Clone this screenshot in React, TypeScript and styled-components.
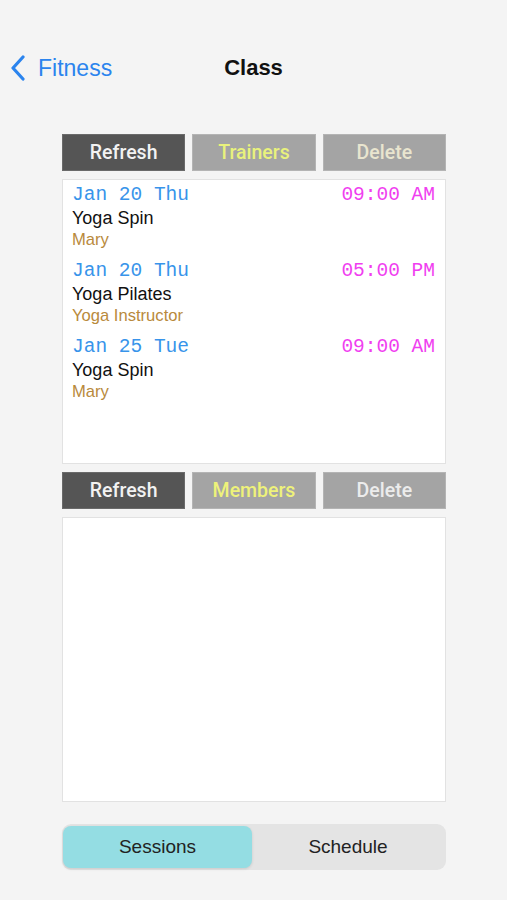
import React from "react"
import styled, { createGlobalStyle } from "styled-components"

const GlobalStyle = createGlobalStyle`
	html, body {
		margin: 0;
		padding: 0;
		background: #f4f4f4;
		font-family: "Liberation Sans", Arial, sans-serif;
	}
`

const Page = styled.div`
	width: 507px;
	height: 900px;
	display: flex;
	flex-direction: column;
	background: #f4f4f4;
`

const NavBar = styled.div`
	height: 48px;
	margin-top: 44px;
	display: flex;
	align-items: center;
	position: relative;
`

const BackButton = styled.div`
	display: flex;
	align-items: center;
	gap: 12px;
	padding-left: 10px;
	color: #2b84ee;
	font-size: 23px;
`

const NavTitle = styled.div`
	position: absolute;
	left: 0;
	right: 0;
	text-align: center;
	font-size: 22px;
	font-weight: bold;
	color: #111;
	pointer-events: none;
`

const Content = styled.div`
	display: flex;
	flex-direction: column;
	padding: 42px 61px 0 62px;
`

const ButtonRow = styled.div`
	display: grid;
	grid-template-columns: 1fr 1fr 1fr;
	gap: 7px;
	height: 37px;
`

const ActionButton = styled.div<{ $dark?: boolean; $color: string }>`
	display: flex;
	align-items: center;
	justify-content: center;
	background: ${(p) => (p.$dark ? "#555555" : "#a4a4a4")};
	border: 1px solid ${(p) => (p.$dark ? "#6a6a6a" : "#b4b4b4")};
	color: ${(p) => p.$color};
	font-family: Roboto, "Liberation Sans", sans-serif;
	font-size: 19.5px;
	font-weight: 500;
	box-sizing: border-box;
`

const Panel = styled.div`
	margin-top: 8px;
	margin-bottom: 8px;
	height: 285px;
	box-sizing: border-box;
	background: #ffffff;
	border: 1px solid #e2e2e2;
	padding: 3px 10px 0 9px;
	display: flex;
	flex-direction: column;
	gap: 8px;
`

const Session = styled.div`
	display: flex;
	flex-direction: column;
`

const DateLine = styled.div`
	display: flex;
	justify-content: space-between;
	height: 24px;
	line-height: 24px;
	font-family: "Liberation Mono", "Courier New", monospace;
	font-size: 19.5px;
`

const DateText = styled.span`
	color: #3894ea;
`

const TimeText = styled.span`
	color: #f03ef0;
`

const ClassName = styled.div`
	height: 22px;
	line-height: 22px;
	font-size: 18px;
	color: #111;
`

const Trainer = styled.div`
	height: 22px;
	line-height: 22px;
	font-size: 16.6px;
	color: #b98a3c;
`

const Segmented = styled.div`
	margin-top: 14px;
	height: 46px;
	box-sizing: border-box;
	background: #e4e4e4;
	border-radius: 9px;
	padding: 2px 2px 2px 1px;
	display: grid;
	grid-template-columns: 189px 1fr;
`

const Segment = styled.div<{ $active?: boolean }>`
	display: flex;
	align-items: center;
	justify-content: center;
	border-radius: 8px;
	font-size: 19px;
	color: #222;
	background: ${(p) => (p.$active ? "#94dde3" : "transparent")};
	box-shadow: ${(p) => (p.$active ? "0 1px 3px rgba(0,0,0,0.12)" : "none")};
`

const sessions = [
	{ date: "Jan 20 Thu", time: "09:00 AM", name: "Yoga Spin", trainer: "Mary" },
	{ date: "Jan 20 Thu", time: "05:00 PM", name: "Yoga Pilates", trainer: "Yoga Instructor" },
	{ date: "Jan 25 Tue", time: "09:00 AM", name: "Yoga Spin", trainer: "Mary" },
]

export default function App() {
	return (
		<Page>
			<GlobalStyle />
			<NavBar>
				<BackButton>
					<svg width="16" height="26" viewBox="0 0 16 26">
						<path
							d="M13 2 L3 13 L13 24"
							fill="none"
							stroke="#2b84ee"
							strokeWidth="3.2"
							strokeLinecap="round"
							strokeLinejoin="round"
						/>
					</svg>
					Fitness
				</BackButton>
				<NavTitle>Class</NavTitle>
			</NavBar>
			<Content>
				<ButtonRow>
					<ActionButton $dark $color="#f2f2f2">Refresh</ActionButton>
					<ActionButton $color="#e9f27c">Trainers</ActionButton>
					<ActionButton $color="#e9e5cf">Delete</ActionButton>
				</ButtonRow>
				<Panel>
					{sessions.map((s, i) => (
						<Session key={i}>
							<DateLine>
								<DateText>{s.date}</DateText>
								<TimeText>{s.time}</TimeText>
							</DateLine>
							<ClassName>{s.name}</ClassName>
							<Trainer>{s.trainer}</Trainer>
						</Session>
					))}
				</Panel>
				<ButtonRow>
					<ActionButton $dark $color="#f2f2f2">Refresh</ActionButton>
					<ActionButton $color="#eef27a">Members</ActionButton>
					<ActionButton $color="#ececec">Delete</ActionButton>
				</ButtonRow>
				<Panel />
				<Segmented>
					<Segment $active>Sessions</Segment>
					<Segment>Schedule</Segment>
				</Segmented>
			</Content>
		</Page>
	)
}
